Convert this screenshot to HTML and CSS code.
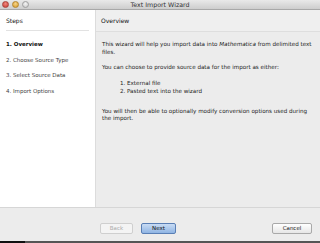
FILE: index.html
```html
<!DOCTYPE html>
<html lang="en">
<head>
    <meta charset="UTF-8">
    <title>Text Import Wizard</title>
    <link rel="stylesheet" href="styles.css">
</head>
<body>
    <div class="window">
        <div class="titlebar">
            <div class="lights">
                <span class="light red"></span>
                <span class="light yellow"></span>
                <span class="light gray"></span>
            </div>
            <div class="title">Text Import Wizard</div>
        </div>

        <div class="main">
            <div class="sidebar">
                <div class="side-head">Steps</div>
                <ul class="steps">
                    <li class="active">1. Overview</li>
                    <li>2. Choose Source Type</li>
                    <li>3. Select Source Data</li>
                    <li>4. Import Options</li>
                </ul>
            </div>
            <div class="content">
                <div class="content-head">Overview</div>
                <div class="content-body">
                    <p>This wizard will help you import data into <span class="em">Mathematica</span> from delimited text<br>files.</p>
                    <p>You can choose to provide source data for the import as either:</p>
                    <ol class="choices">
                        <li>External file</li>
                        <li>Pasted text into the wizard</li>
                    </ol>
                    <p>You will then be able to optionally modify conversion options used during the import.</p>
                </div>
            </div>
        </div>

        <div class="footer">
            <button class="btn disabled">Back</button>
            <button class="btn primary">Next</button>
            <span class="spacer"></span>
            <button class="btn">Cancel</button>
        </div>
        <div class="bottom-strip"></div>
    </div>
</body>
</html>
```

FILE: styles.css
```css
body {
    margin: 0;
    padding: 0;
    font-family: "DejaVu Sans", "Liberation Sans", sans-serif;
    color: #222;
    background: #2a2a2a;
}
.window {
    width: 320px;
    height: 243px;
    display: flex;
    flex-direction: column;
    overflow: hidden;
    background: #ececec;
}
.titlebar {
    height: 10px;
    display: flex;
    align-items: center;
    position: relative;
    background: linear-gradient(#e9e9e9, #cdcdcd);
    border-bottom: 1px solid #a8a8a8;
    box-sizing: border-box;
}
.lights {
    display: flex;
    gap: 3px;
    padding-left: 2px;
}
.light {
    width: 7px;
    height: 7px;
    border-radius: 50%;
    box-sizing: border-box;
}
.light.red {
    background: radial-gradient(circle at 50% 35%, #f08a80, #c8362c);
    border: 1px solid #a8453c;
}
.light.yellow {
    background: radial-gradient(circle at 50% 35%, #f6d58a, #d89a25);
    border: 1px solid #b48630;
}
.light.gray {
    background: radial-gradient(circle at 50% 35%, #f4f4f4, #c6c6c6);
    border: 1px solid #a0a0a0;
}
.title {
    position: absolute;
    left: 0;
    right: 0;
    text-align: center;
    font-size: 6.3px;
    color: #333;
    line-height: 10px;
}
.main {
    height: 197px;
    display: flex;
}
.sidebar {
    width: 96px;
    background: #fff;
    border-right: 1px solid #dcdcdc;
    box-sizing: border-box;
}
.side-head {
    margin: 0 6px;
    height: 20px;
    line-height: 22px;
    font-size: 6px;
    color: #111;
    border-bottom: 1px solid #e2e2e2;
}
.steps {
    list-style: none;
    margin: 0;
    padding: 9px 0 0 6px;
    font-size: 5.5px;
}
.steps li {
    height: 15.6px;
    line-height: 8px;
    color: #444;
}
.steps li.active {
    font-weight: bold;
    color: #111;
}
.content {
    flex: 1;
    background: #ececec;
}
.content-head {
    height: 21px;
    line-height: 22px;
    padding-left: 5px;
    font-size: 6px;
    color: #111;
    background: #efefef;
    border-bottom: 1px solid #dedede;
}
.content-body {
    padding: 9px 4px 0 6px;
    font-size: 5.6px;
    line-height: 7.5px;
    color: #222;
}
.content-body p {
    margin: 0 0 7.6px;
}
.content-body .em {
    font-style: italic;
}
.choices {
    margin: 0 0 13px;
    padding-left: 25px;
    line-height: 8px;
}
.footer {
    height: 34px;
    display: flex;
    align-items: flex-start;
    padding: 15px 8px 0 100px;
    box-sizing: border-box;
    border-top: 1px solid #d6d6d6;
    background: #ececec;
}
.btn {
    height: 11px;
    padding: 0;
    font-family: inherit;
    font-size: 5.5px;
    line-height: 9px;
    border: 1px solid #a9a9a9;
    border-radius: 2px;
    background: linear-gradient(#ffffff, #e6e6e6);
    color: #222;
}
.btn.disabled {
    width: 33px;
    color: #aaa;
    border-color: #cfcfcf;
    background: #f4f4f4;
}
.btn.primary {
    width: 35px;
    margin-left: 8px;
    border-color: #5a7fb5;
    background: linear-gradient(#c9dcf4, #8fb4e3);
    color: #111;
}
.spacer {
    flex: 1;
}
.btn:last-child {
    width: 40px;
}
.bottom-strip {
    height: 2px;
    background: linear-gradient(to right, #111 25px, #555 25px);
}
```
